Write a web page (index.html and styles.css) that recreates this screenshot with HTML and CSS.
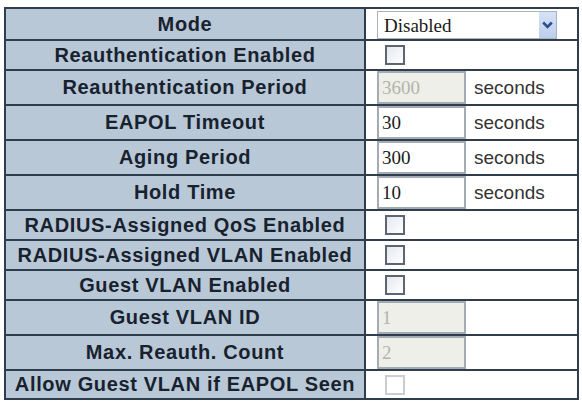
FILE: index.html
```html
<!DOCTYPE html>
<html>
<head>
<meta charset="utf-8">
<link rel="stylesheet" href="styles.css">
</head>
<body>
<table class="config">
  <colgroup><col class="c-label"><col class="c-value"></colgroup>
  <tr class="h32"><th>Mode</th>
    <td><div class="select-wrap"><select class="select"><option>Disabled</option></select><span class="select-btn"><svg width="11" height="8" viewBox="0 0 11 8"><path d="M1.2 1.5 L5.5 5.8 L9.8 1.5" fill="none" stroke="#2c4f8e" stroke-width="2.6"/></svg></span></div></td></tr>
  <tr class="h30"><th>Reauthentication Enabled</th><td><input type="checkbox" class="chk"></td></tr>
  <tr class="h35"><th>Reauthentication Period</th><td><div class="field"><input class="txt" value="3600" disabled><span class="unit">seconds</span></div></td></tr>
  <tr class="h35"><th>EAPOL Timeout</th><td><div class="field"><input class="txt" value="30"><span class="unit">seconds</span></div></td></tr>
  <tr class="h34"><th>Aging Period</th><td><div class="field"><input class="txt" value="300"><span class="unit">seconds</span></div></td></tr>
  <tr class="h35"><th>Hold Time</th><td><div class="field"><input class="txt" value="10"><span class="unit">seconds</span></div></td></tr>
  <tr class="h30"><th>RADIUS-Assigned QoS Enabled</th><td><input type="checkbox" class="chk"></td></tr>
  <tr class="h30"><th>RADIUS-Assigned VLAN Enabled</th><td><input type="checkbox" class="chk"></td></tr>
  <tr class="h30"><th>Guest VLAN Enabled</th><td><input type="checkbox" class="chk"></td></tr>
  <tr class="h34"><th>Guest VLAN ID</th><td><div class="field"><input class="txt" value="1" disabled></div></td></tr>
  <tr class="h35"><th>Max. Reauth. Count</th><td><div class="field"><input class="txt" value="2" disabled></div></td></tr>
  <tr class="h29"><th>Allow Guest VLAN if EAPOL Seen</th><td><input type="checkbox" class="chk" disabled></td></tr>
</table>
</body>
</html>
```
FILE: styles.css
```css
html, body {
  margin: 0;
  padding: 0;
  background: #ffffff;
}

.config {
  margin: 7px 0 0 4px;
  width: 573px;
  border-collapse: collapse;
  border: 2px solid #3f5670;
  table-layout: fixed;
}

.c-label { width: 360px; }
.c-value { width: 213px; }

.config th,
.config td {
  border: 2px solid #2f3d4d;
  padding: 0;
  vertical-align: middle;
}

.config th {
  background: #b9c8d7;
  color: #18222e;
  font-family: "Liberation Sans", Arial, sans-serif;
  font-weight: bold;
  font-size: 20px;
  letter-spacing: 0.65px;
  text-align: center;
  white-space: nowrap;
}

.config td {
  background: #ffffff;
  padding-left: 11px;
}

.h29 { height: 29px; }
.h30 { height: 30px; }
.h32 { height: 32px; }
.h34 { height: 34px; }
.h35 { height: 35px; }

.select-wrap {
  position: relative;
  width: 180px;
  height: 28px;
  margin-top: 2px;
}

.select {
  appearance: none;
  -webkit-appearance: none;
  width: 100%;
  height: 100%;
  box-sizing: border-box;
  border: 1px solid #a9b3bd;
  background: #ffffff;
  font-family: "Liberation Serif", "Times New Roman", serif;
  font-size: 19px;
  color: #1a1a1a;
  padding: 0 0 0 6px;
  margin: 0;
  border-radius: 0;
}

.select-btn {
  position: absolute;
  right: 1px;
  top: 1px;
  bottom: 1px;
  width: 17px;
  background: linear-gradient(#d6e2f6, #bccfec);
  display: flex;
  align-items: center;
  justify-content: center;
  pointer-events: none;
}

.chk {
  appearance: none;
  -webkit-appearance: none;
  display: block;
  width: 20px;
  height: 20px;
  margin: 0 0 0 8px;
  box-sizing: border-box;
  border: 2px solid #5d6670;
  background: linear-gradient(135deg, #e4e8ee, #ffffff);
}

.chk:disabled {
  border-color: #c9ced3;
  background: #ffffff;
}

.field {
  display: flex;
  align-items: center;
  height: 100%;
}

.txt {
  width: 89px;
  height: 33px;
  box-sizing: border-box;
  border: 2px solid #a3acb5;
  margin: 0;
  padding: 0 0 0 3px;
  font-family: "Liberation Serif", "Times New Roman", serif;
  font-size: 19px;
  color: #1a1a1a;
  background: #ffffff;
}

.txt:disabled {
  background: #eeefe8;
  color: #b4b4aa;
}

.unit {
  margin-left: 8px;
  font-family: "Liberation Sans", Arial, sans-serif;
  font-size: 19px;
  color: #333333;
}
```
